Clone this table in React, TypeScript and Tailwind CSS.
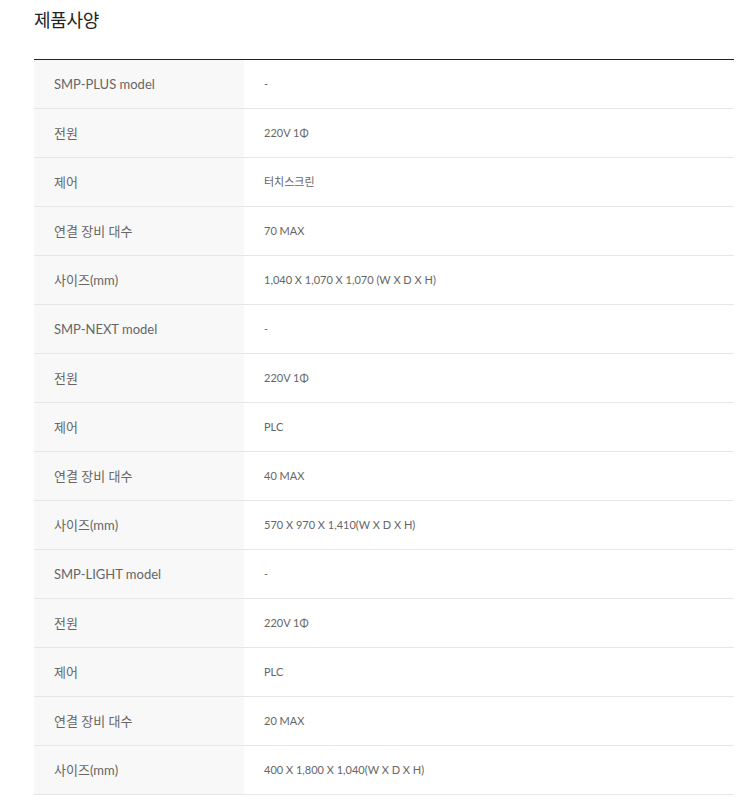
import React from "react";

const rows: [string, string][] = [
  ["SMP-PLUS model", "-"],
  ["전원", "220V 1Φ"],
  ["제어", "터치스크린"],
  ["연결 장비 대수", "70 MAX"],
  ["사이즈(mm)", "1,040 X 1,070 X 1,070 (W X D X H)"],
  ["SMP-NEXT model", "-"],
  ["전원", "220V 1Φ"],
  ["제어", "PLC"],
  ["연결 장비 대수", "40 MAX"],
  ["사이즈(mm)", "570 X 970 X 1,410(W X D X H)"],
  ["SMP-LIGHT model", "-"],
  ["전원", "220V 1Φ"],
  ["제어", "PLC"],
  ["연결 장비 대수", "20 MAX"],
  ["사이즈(mm)", "400 X 1,800 X 1,040(W X D X H)"],
];

export default function App() {
  return (
    <div
      className="bg-white w-[742px] min-h-[808px] pl-[34px] pr-[8px] pt-[6px]"
      style={{ fontFamily: 'Lato, "Noto Sans CJK KR", sans-serif' }}
    >
      <h2 className="text-[18px] leading-[28px] text-[#222] font-normal tracking-[-0.3px]">제품사양</h2>
      <div className="mt-[25px] border-t border-[#222] w-[700px]">
        {rows.map(([k, v], i) => (
          <div key={i} className="flex h-[49px] border-b border-[#e6e6e6]">
            <div className="w-[210px] bg-[#f8f8f8] pl-[20px] pt-[1px] flex items-center text-[13px] text-[#666] font-normal">
              {k}
            </div>
            <div className="flex-1 pl-[20px] pt-[1px] flex items-center text-[11px] text-[#666] font-normal">
              {v}
            </div>
          </div>
        ))}
      </div>
    </div>
  );
}
